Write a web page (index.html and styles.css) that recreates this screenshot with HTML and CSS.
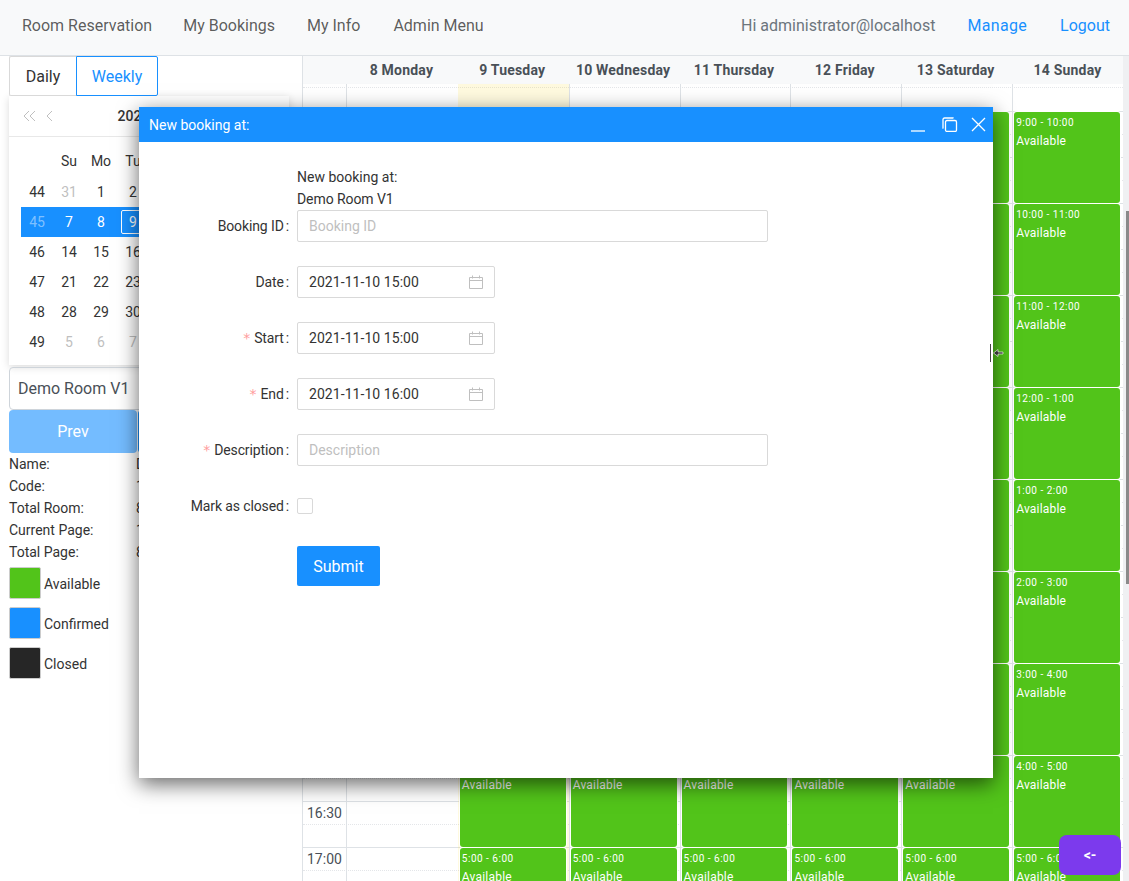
FILE: index.html
```html
<!DOCTYPE html>
<html lang="en">
<head>
<meta charset="utf-8">
<title>Room Reservation</title>
<link rel="stylesheet" href="styles.css">
</head>
<body>
<nav class="nav">
  <div class="nav-left">
    <a class="nav-link nav-first">Room Reservation</a>
    <a class="nav-link">My Bookings</a>
    <a class="nav-link nav-info">My Info</a>
    <a class="nav-link">Admin Menu</a>
  </div>
  <div class="nav-right">
    <span class="nav-user">Hi administrator@localhost</span>
    <a class="nav-link nav-blue nav-manage">Manage</a>
    <a class="nav-link nav-blue">Logout</a>
  </div>
</nav>
<main class="main">
  <aside class="side">
    <div class="tabs"><button class="tab">Daily</button><button class="tab tab-on">Weekly</button></div>
    <div class="picker">
      <div class="picker-head">
        <span class="picker-nav">
          <svg class="chev" width="14" height="12" viewBox="0 0 14 12"><path d="M6 1 1 6l5 5M12 1 7 6l5 5"/></svg>
          <svg class="chev chev-one" width="8" height="12" viewBox="0 0 8 12"><path d="M6 1 1 6l5 5"/></svg>
        </span>
        <b class="picker-title">2021 Nov</b>
      </div>
      <div class="dates">
        <span></span><span>Su</span><span>Mo</span><span>Tu</span><span>We</span><span>Th</span><span>Fr</span><span>Sa</span>
        <span>44</span><span class="off">31</span><span>1</span><span>2</span><span>3</span><span>4</span><span>5</span><span>6</span>
        <span class="sel off-sel">45</span><span class="sel">7</span><span class="sel">8</span><span class="sel"><i class="today">9</i></span><span class="sel">10</span><span class="sel">11</span><span class="sel">12</span><span class="sel">13</span>
        <span>46</span><span>14</span><span>15</span><span>16</span><span>17</span><span>18</span><span>19</span><span>20</span>
        <span>47</span><span>21</span><span>22</span><span>23</span><span>24</span><span>25</span><span>26</span><span>27</span>
        <span>48</span><span>28</span><span>29</span><span>30</span><span class="off">1</span><span class="off">2</span><span class="off">3</span><span class="off">4</span>
        <span>49</span><span class="off">5</span><span class="off">6</span><span class="off">7</span><span class="off">8</span><span class="off">9</span><span class="off">10</span><span class="off">11</span>
      </div>
    </div>
    <div class="room-select">Demo Room V1</div>
    <div class="pager"><button class="pg pg-off">Prev</button><button class="pg">Next</button></div>
    <dl class="info">
      <dt>Name:</dt><dd>Demo Room V1</dd>
      <dt>Code:</dt><dd>1</dd>
      <dt>Total Room:</dt><dd>8</dd>
      <dt>Current Page:</dt><dd>1</dd>
      <dt>Total Page:</dt><dd>8</dd>
    </dl>
    <div class="legend"><i class="swatch sw-green"></i>Available</div>
    <div class="legend"><i class="swatch sw-blue"></i>Confirmed</div>
    <div class="legend"><i class="swatch sw-dark"></i>Closed</div>
  </aside>

  <section class="cal">
    <div class="cal-head">
      <span></span><b>8 Monday</b><b>9 Tuesday</b><b>10 Wednesday</b><b>11 Thursday</b><b>12 Friday</b><b>13 Saturday</b><b class="head-last">14 Sunday</b>
    </div>
    <div class="cal-body">
      <div class="rows">
        <div class="row row-first"><div class="top"></div></div>
        <div class="row"><div class="top">09:00</div></div>
        <div class="row"><div class="top">09:30</div></div>
        <div class="row"><div class="top">10:00</div></div>
        <div class="row"><div class="top">10:30</div></div>
        <div class="row"><div class="top">11:00</div></div>
        <div class="row"><div class="top">11:30</div></div>
        <div class="row"><div class="top">12:00</div></div>
        <div class="row"><div class="top">12:30</div></div>
        <div class="row"><div class="top">13:00</div></div>
        <div class="row"><div class="top">13:30</div></div>
        <div class="row"><div class="top">14:00</div></div>
        <div class="row"><div class="top">14:30</div></div>
        <div class="row"><div class="top">15:00</div></div>
        <div class="row"><div class="top">15:30</div></div>
        <div class="row"><div class="top">16:00</div></div>
        <div class="row"><div class="top">16:30</div></div>
        <div class="row"><div class="top">17:00</div></div>
      </div>
      <div class="cols">
        <div class="col"></div>
        <div class="col"></div>
        <div class="col col-today">
          <div class="ev"><small>9:00 - 10:00</small>Available</div>
          <div class="ev"><small>10:00 - 11:00</small>Available</div>
          <div class="ev"><small>11:00 - 12:00</small>Available</div>
          <div class="ev"><small>12:00 - 1:00</small>Available</div>
          <div class="ev"><small>1:00 - 2:00</small>Available</div>
          <div class="ev"><small>2:00 - 3:00</small>Available</div>
          <div class="ev"><small>3:00 - 4:00</small>Available</div>
          <div class="ev"><small>4:00 - 5:00</small>Available</div>
          <div class="ev"><small>5:00 - 6:00</small>Available</div>
        </div>
        <div class="col">
          <div class="ev"><small>9:00 - 10:00</small>Available</div>
          <div class="ev"><small>10:00 - 11:00</small>Available</div>
          <div class="ev"><small>11:00 - 12:00</small>Available</div>
          <div class="ev"><small>12:00 - 1:00</small>Available</div>
          <div class="ev"><small>1:00 - 2:00</small>Available</div>
          <div class="ev"><small>2:00 - 3:00</small>Available</div>
          <div class="ev"><small>3:00 - 4:00</small>Available</div>
          <div class="ev"><small>4:00 - 5:00</small>Available</div>
          <div class="ev"><small>5:00 - 6:00</small>Available</div>
        </div>
        <div class="col">
          <div class="ev"><small>9:00 - 10:00</small>Available</div>
          <div class="ev"><small>10:00 - 11:00</small>Available</div>
          <div class="ev"><small>11:00 - 12:00</small>Available</div>
          <div class="ev"><small>12:00 - 1:00</small>Available</div>
          <div class="ev"><small>1:00 - 2:00</small>Available</div>
          <div class="ev"><small>2:00 - 3:00</small>Available</div>
          <div class="ev"><small>3:00 - 4:00</small>Available</div>
          <div class="ev"><small>4:00 - 5:00</small>Available</div>
          <div class="ev"><small>5:00 - 6:00</small>Available</div>
        </div>
        <div class="col">
          <div class="ev"><small>9:00 - 10:00</small>Available</div>
          <div class="ev"><small>10:00 - 11:00</small>Available</div>
          <div class="ev"><small>11:00 - 12:00</small>Available</div>
          <div class="ev"><small>12:00 - 1:00</small>Available</div>
          <div class="ev"><small>1:00 - 2:00</small>Available</div>
          <div class="ev"><small>2:00 - 3:00</small>Available</div>
          <div class="ev"><small>3:00 - 4:00</small>Available</div>
          <div class="ev"><small>4:00 - 5:00</small>Available</div>
          <div class="ev"><small>5:00 - 6:00</small>Available</div>
        </div>
        <div class="col">
          <div class="ev"><small>9:00 - 10:00</small>Available</div>
          <div class="ev"><small>10:00 - 11:00</small>Available</div>
          <div class="ev"><small>11:00 - 12:00</small>Available</div>
          <div class="ev"><small>12:00 - 1:00</small>Available</div>
          <div class="ev"><small>1:00 - 2:00</small>Available</div>
          <div class="ev"><small>2:00 - 3:00</small>Available</div>
          <div class="ev"><small>3:00 - 4:00</small>Available</div>
          <div class="ev"><small>4:00 - 5:00</small>Available</div>
          <div class="ev"><small>5:00 - 6:00</small>Available</div>
        </div>
        <div class="col">
          <div class="ev"><small>9:00 - 10:00</small>Available</div>
          <div class="ev"><small>10:00 - 11:00</small>Available</div>
          <div class="ev"><small>11:00 - 12:00</small>Available</div>
          <div class="ev"><small>12:00 - 1:00</small>Available</div>
          <div class="ev"><small>1:00 - 2:00</small>Available</div>
          <div class="ev"><small>2:00 - 3:00</small>Available</div>
          <div class="ev"><small>3:00 - 4:00</small>Available</div>
          <div class="ev"><small>4:00 - 5:00</small>Available</div>
          <div class="ev"><small>5:00 - 6:00</small>Available</div>
        </div>
      </div>
    </div>
  </section>
  <div class="scroll"><div class="thumb"></div></div>
</main>

<div class="modal">
  <header class="modal-head">
    <span>New booking at:</span>
    <span class="win-icons">
      <svg class="win-min" width="15" height="15" viewBox="0 0 15 15"><path d="M0 14h14"/></svg>
      <svg width="16" height="15" viewBox="0 0 16 15"><path d="M11 1.500V1H2.500A1.500 1.500 0 0 0 1 2.500V11h.5"/><rect x="3.500" y="3.500" width="11" height="11" rx="1.500"/></svg>
      <svg width="15" height="15" viewBox="0 0 15 15"><path d="M1 1l13 13M14 1 1 14"/></svg>
    </span>
  </header>
  <form class="form">
    <div class="form-note"><div>New booking at:</div><div class="tight">Demo Room V1</div></div>
    <div class="field">
      <label class="lbl">Booking ID<i class="colon">:</i></label>
      <div class="input input-wide ph">Booking ID</div>
    </div>
    <div class="field">
      <label class="lbl">Date<i class="colon">:</i></label>
      <div class="input input-date">2021-11-10 15:00
        <svg class="cal-ico" width="14" height="14" viewBox="0 0 14 14"><path d="M.5 2.500h13v11H.5zM.5 5.500h13M3.500.5v3M10.500.5v3"/></svg>
      </div>
    </div>
    <div class="field">
      <label class="lbl"><em class="req">*</em>Start<i class="colon">:</i></label>
      <div class="input input-date">2021-11-10 15:00
        <svg class="cal-ico" width="14" height="14" viewBox="0 0 14 14"><path d="M.5 2.500h13v11H.5zM.5 5.500h13M3.500.5v3M10.500.5v3"/></svg>
      </div>
    </div>
    <div class="field">
      <label class="lbl"><em class="req">*</em>End<i class="colon">:</i></label>
      <div class="input input-date">2021-11-10 16:00
        <svg class="cal-ico" width="14" height="14" viewBox="0 0 14 14"><path d="M.5 2.500h13v11H.5zM.5 5.500h13M3.500.5v3M10.500.5v3"/></svg>
      </div>
    </div>
    <div class="field">
      <label class="lbl"><em class="req">*</em>Description<i class="colon">:</i></label>
      <div class="input input-wide ph">Description</div>
    </div>
    <div class="field">
      <label class="lbl">Mark as closed<i class="colon">:</i></label>
      <span class="check"></span>
    </div>
    <div class="field field-submit"><button class="submit" type="button">Submit</button></div>
  </form>
</div>

<svg class="cursor" width="15" height="18" viewBox="0 0 15 18"><path class="cursor-bar" d="M.5 0v18"/><path class="cursor-arrow" d="M3.500 9l4.500-3.500V8h5v2H8v2.500z"/></svg>
<button class="back">&lt;-</button>
</body>
</html>
```

FILE: styles.css
```css
* { box-sizing: border-box; }
html, body { margin: 0; padding: 0; height: 881px; overflow: hidden; }
body { font-family: Roboto, "Liberation Sans", sans-serif; font-size: 14px; color: #333; background: #fff; }
button { font-family: inherit; }

/* navbar */
.nav { height: 56px; display: flex; justify-content: space-between; align-items: center; background: #f8f9fa; border-bottom: 1px solid #dee2e6; padding: 0 3px 4px 6px; font-size: 16px; }
.nav-left, .nav-right { display: flex; align-items: center; }
.nav-link { padding: 0 16px; color: rgba(0,0,0,.65); }
.nav-first { padding-right: 15px; }
.nav-info { padding-right: 17px; }
.nav-user { color: #6c757d; margin-right: 16px; }
.nav-blue { color: #1890ff; }
.nav-manage { letter-spacing: .33px; margin-right: 1px; }

/* layout */
.main { display: flex; height: 825px; }
.side { width: 302px; flex: none; padding-left: 9px; }
.cal { width: 821px; flex: none; border-left: 1px solid #dee2e6; overflow: hidden; }
.scroll { width: 6px; flex: none; padding: 155px 0 0 3px; background: #eff0f2; }
.thumb { height: 373px; background: #8a8a8a; }

/* tabs */
.tabs { display: flex; height: 40px; }
.tab { height: 40px; padding: 0; background: #fff; font-size: 16px; color: #333; border: 1px solid #d9d9d9; width: 67px; border-radius: 2px 0 0 2px; border-right: 0; }
.tab-on { width: 82px; color: #1890ff; border: 1px solid #1890ff; border-radius: 0 2px 2px 0; }

/* date picker */
.picker { width: 280px; height: 269px; box-shadow: 0 2px 8px rgba(0,0,0,.15); background: #fff; }
.picker-head { height: 41px; border-bottom: 1px solid #e8e8e8; display: flex; align-items: center; padding-left: 14px; }
.picker-nav { display: flex; align-items: center; gap: 9px; }
.chev { fill: none; stroke: #bfbfbf; stroke-width: 1; }
.picker-title { flex: 1; text-align: center; padding-right: 44px; font-weight: 500; margin-left: -4px; }
.dates { display: grid; grid-template-columns: repeat(8, 32px); grid-template-rows: 31px; grid-auto-rows: 30px; margin: 9px 0 0 12px; text-align: center; line-height: 30px; }
.dates .off { color: #bfbfbf; }
.dates .sel { background: #1890ff; color: #fff; }
.dates .off-sel { color: rgba(255,255,255,.45); }
.today { display: block; font-style: normal; width: 24px; height: 24px; line-height: 22px; margin: 3px 4px; border: 1px solid #fff; border-radius: 2px; }

/* room controls */
.room-select { width: 280px; height: 43px; margin-top: 2px; border: 1px solid #ced4da; border-radius: 4px; padding-left: 8px; line-height: 41px; font-size: 16px; color: #495057; }
.pager { display: flex; gap: 1px; width: 280px; }
.pg { flex: 1; height: 43px; border: 0; border-radius: 4px; background: #1890ff; color: #fff; font-size: 16px; }
.pg-off { flex: none; width: 128px; background: #74bcff; }
.info { display: grid; grid-template-columns: 127px 1fr; grid-auto-rows: 22px; line-height: 22px; margin: 0; }
.info dd { margin: 0; }
.legend { display: flex; align-items: flex-start; height: 40px; gap: 3px; line-height: 42px; }
.swatch { width: 32px; height: 32px; margin-top: 4px; border: 1px solid #ccc; border-radius: 2px; }
.sw-green { background: #52c41a; }
.sw-blue { background: #1890ff; }
.sw-dark { background: #262626; }

/* calendar */
.cal-head { display: grid; grid-template-columns: 44px repeat(7, 1fr); height: 28px; align-items: center; background: #f8f9fa; text-align: center; color: #495057; font-weight: 700; letter-spacing: .2px; }
.cal-head b { font-weight: 700; padding-right: 2px; }
.cal-head .head-last { padding-right: 0; }
.cal-body { position: relative; height: 797px; overflow: hidden; }
.row { height: 46px; border-bottom: 1px solid #dee2e6; }
.row-first { height: 28px; }
.top { height: 23px; border-bottom: 1px dotted #e4e6e9; padding-left: 4px; line-height: 22px; color: #495057; }
.row-first .top { height: 4px; }
.cols { position: absolute; inset: 0; display: grid; grid-template-columns: 43px 111.86px repeat(6, 1fr); }
.col { border-left: 1px solid #dee2e6; padding: 28px 3px 0 1px; display: flex; flex-direction: column; gap: 1px; }
.col:first-child { border-left: 0; }
.col-today { background: rgba(255,220,40,.15); border-left-color: transparent; }
.ev { height: 91px; flex: none; background: #52c41a; color: #fff; border-radius: 3px; padding: 4px 2px 0; font-size: 12px; line-height: 18px; box-shadow: 0 0 0 1px #fff; letter-spacing: .2px; }
.ev small { display: block; font-size: 10px; line-height: 13px; margin-bottom: 3px; letter-spacing: .5px; }

/* modal */
.modal { position: absolute; left: 139px; top: 107px; width: 854px; height: 671px; background: #fff; box-shadow: 0 6px 20px rgba(0,0,0,.6); }
.modal-head { height: 35px; background: #1890ff; color: #fff; display: flex; align-items: center; justify-content: space-between; padding: 0 7px 0 10px; }
.win-icons { display: flex; gap: 13px; align-items: center; }
.win-icons svg { fill: none; stroke: #fff; stroke-width: 1.300; display: block; }
.win-icons .win-min { margin-right: 3px; }
.form { padding-top: 24px; }
.form-note { margin-left: 158px; line-height: 22px; }
.tight { letter-spacing: -.08px; }
.field { display: flex; align-items: center; height: 32px; margin-bottom: 24px; }
.lbl { width: 158px; text-align: right; flex: none; letter-spacing: -.12px; }
.colon { font-style: normal; margin: 0 8px 0 2px; }
.req { font-style: normal; color: #ff9c9c; margin-right: 4px; font-family: "DejaVu Sans", sans-serif; font-size: 14px; }
.input { height: 32px; border: 1px solid #d9d9d9; border-radius: 2px; padding: 0 11px; line-height: 30px; display: flex; align-items: center; justify-content: space-between; }
.input-wide { width: 471px; }
.input-date { width: 198px; letter-spacing: .06px; }
.ph { color: #bfbfbf; }
.cal-ico { fill: none; stroke: #bfbfbf; stroke-width: 1; }
.check { width: 16px; height: 16px; border: 1px solid #d9d9d9; border-radius: 2px; }
.field-submit { padding-left: 158px; height: 40px; margin: 0; }
.submit { width: 83px; height: 40px; background: #1890ff; color: #fff; border: 0; border-radius: 2px; font-size: 16px; padding: 0; }

/* overlays */
.cursor { position: absolute; left: 990px; top: 344px; }
.cursor-bar { stroke: #444; stroke-width: 1; fill: none; }
.cursor-arrow { fill: #333; stroke: #fff; stroke-width: .6; }
.back { position: absolute; left: 1059px; top: 835px; width: 62px; height: 40px; border: 0; border-radius: 8px; background: #7c3aed; color: #fff; font-weight: 700; font-size: 14px; padding: 0; }
```
